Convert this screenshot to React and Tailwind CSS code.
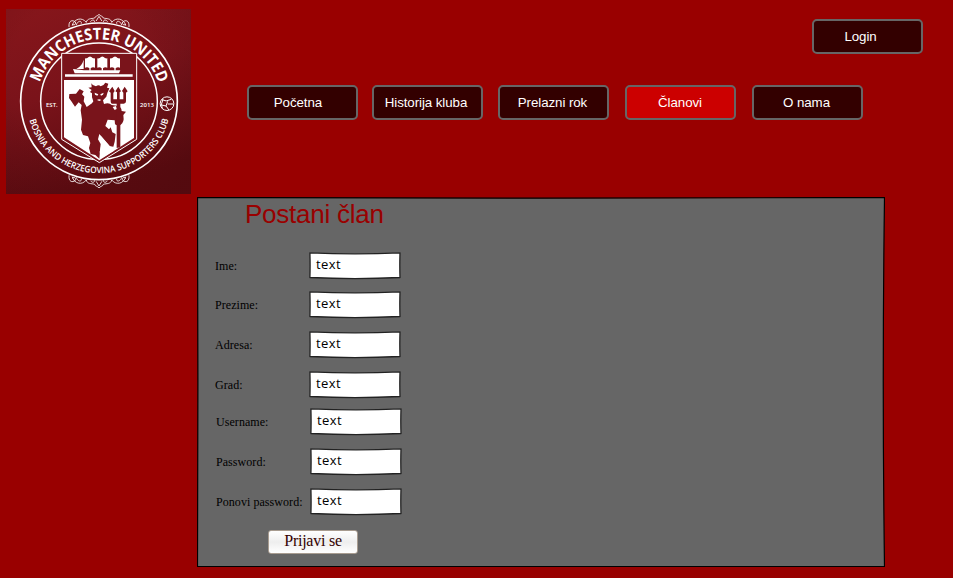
import React from "react";

const NAV = [
  { label: "Početna", box: "ml-0 pr-[9px]" },
  { label: "Historija kluba", box: "ml-[14px] pr-[3px]" },
  { label: "Prelazni rok", box: "ml-[15px] pr-[2px]" },
  { label: "Članovi", box: "ml-[16px] pr-[1px]", active: true },
  { label: "O nama", box: "ml-[16px] pr-[2px]" },
];

const FIELDS = [
  { label: "Ime:", row: "mt-0", indent: "pl-0" },
  { label: "Prezime:", row: "mt-[11px]", indent: "pl-0" },
  { label: "Adresa:", row: "mt-[12px]", indent: "pl-0" },
  { label: "Grad:", row: "mt-[12px]", indent: "pl-0" },
  { label: "Username:", row: "mt-[9px]", indent: "pl-px" },
  { label: "Password:", row: "mt-[12px]", indent: "pl-px" },
  { label: "Ponovi password:", row: "mt-[12px]", indent: "pl-px" },
];

function NavButton({ label, box, active }) {
  return (
    <button
      className={`${box} ${active ? "bg-[#cc0000]" : "bg-[#330000]"} h-[35px] w-[111px] shrink-0 whitespace-nowrap rounded-[5px] border-2 border-[#666666] text-center font-['Liberation_Sans',Arial,sans-serif] text-[13.33px] leading-[31px] tracking-[-0.08px] text-white`}
    >
      {label}
    </button>
  );
}

function Flourish() {
  return (
    <g fill="none" stroke="#fff" strokeWidth="2.5" strokeLinecap="round">
      <path d="M207 80 C205 62 217 58 226 66 C230 72 222 78 217 73 M217 76 C222 56 246 50 258 66 M229 74 C233 61 247 61 244 70" />
      <path d="M272 64 C280 54 287 65 283 66 M322 64 C314 54 307 65 311 66 M259 66 C262 54 274 57 284 54 C286 47 293 49 297 43 C301 49 308 47 310 54 C320 57 332 54 335 66 M289 62 L297 49 L305 62" />
      <path d="M387 80 C389 62 377 58 368 66 C364 72 372 78 377 73 M377 76 C372 56 348 50 336 66 M365 74 C361 61 347 61 350 70" />
    </g>
  );
}

function Crest() {
  return (
    <svg viewBox="18 27 555 555" className="block h-[185px] w-[185px] shrink-0" role="img">
      <defs>
        <linearGradient id="field" x1="0.1" y1="0" x2="0.45" y2="1">
          <stop offset="0" stopColor="#86161b" />
          <stop offset="0.45" stopColor="#7a131a" />
          <stop offset="1" stopColor="#5a0b10" />
        </linearGradient>
        <radialGradient id="edge" cx="0.42" cy="0.35" r="0.8">
          <stop offset="0.5" stopColor="#42060b" stopOpacity="0" />
          <stop offset="1" stopColor="#42060b" stopOpacity="0.25" />
        </radialGradient>
        <path id="topArc" d="M111 304 A186 186 0 0 1 483 304" />
        <path id="bottomArc" d="M81 304 A216 216 0 0 0 513 304" />
      </defs>
      <rect x="18" y="27" width="555" height="555" fill="url(#field)" />
      <rect x="18" y="27" width="555" height="555" fill="url(#edge)" />
      <Flourish />
      <g transform="matrix(1 0 0 -1 0 607)">
        <Flourish />
      </g>
      <circle cx="297" cy="304" r="235" fill="none" stroke="#fff" strokeWidth="5" />
      <circle cx="297" cy="304" r="175" fill="none" stroke="#fff" strokeWidth="4.5" />
      <path d="M185 160 H410 V418 L298 488 L185 418 Z" fill="#7a141b" stroke="#fff" strokeWidth="3" />

      {/* ship */}
      <g fill="#fff">
        <path d="M195 223 H398 V230 H195 Z" />
        <path d="M219 207 L252 211 H361 L357 220 H224 Z" />
        <path d="M229 207 Q246 198 251 179 V207 Z" />
        {[270, 307, 345].map((x) => (
          <path
            key={x}
            transform={`translate(${x} 0)`}
            d="M-15 175 Q-8 176 -4 171 Q0 168 4 171 Q8 176 15 175 V203 Q7 200 2 205 V212 H-2 V205 Q-7 200 -15 203 Z"
          />
        ))}
      </g>

      {/* devil with trident */}
      <path d="M192 240 H402 V414 L298 481 L192 412 Z" fill="#fff" />
      <g fill="#79141b">
        <path d="M274 250 Q278 258 288 259 Q296 252 302 259 Q311 257 316 248 L325 251 L321 263 L328 265 L322 279 L319 290 L309 301 L312 312 Q327 306 335 315 L350 317 Q365 319 365 333 L378 335 L370 345 L371 358 Q370 371 356 379 L345 373 L344 361 L323 359 L316 378 L327 388 L332 382 L337 397 L347 402 L344 425 L340 440 L328 438 L298 402 L294 418 L302 432 L300 452 L298 476 L286 465 L272 462 L267 444 L271 429 L264 409 L249 405 L243 389 L246 359 L242 331 L245 315 L236 307 L225 320 L214 304 L207 294 L208 282 L228 281 L239 267 L251 274 L246 283 L253 290 L251 304 L260 321 L276 310 L280 304 L276 292 L276 280 L270 276 L275 270 L265 263 L275 262 Z" />
        <path d="M350 444 V311 H336 Q332 311 332 304 V278 L327 274 L337 260 L344 273 L340 279 V298 H351 V277 L346 274 L355 260 L363 274 L359 277 V298 H370 V278 L366 273 L374 260 L383 274 L378 278 V304 Q378 311 371 311 H361 V442 Z" />
      </g>
      <g fill="#fff">
        <path d="M284 278 L295 283 L292 287 L285 284 Z M301 283 L311 278 L309 284 L303 287 Z M291 300 Q297 296 304 300 L298 303 Z" />
        <path d="M301 406 L342 452 L309 472 L302 474 L299 455 L305 432 Z" />
        <path d="M348 318 L350 327 L344 330 L338 321 Z M324 364 L336 366 L331 374 Z" />
      </g>

      {/* ball */}
      <g fill="none" stroke="#fff" strokeWidth="3">
        <circle cx="501" cy="311" r="20.5" />
        <path d="M486 299 Q497 307 514 298 M489 298 Q481 312 487 326 M503 304 L498 318 L485 315 M498 318 L507 330 M503 312 H520" />
      </g>

      <g fill="#fff" className="font-['Open_Sans','Noto_Sans',sans-serif]">
        <text fontSize="48" fontWeight="700">
          <textPath href="#topArc" startOffset="57" textLength="472" lengthAdjust="spacingAndGlyphs">
            MANCHESTER UNITED
          </textPath>
        </text>
        <text fontSize="27" fontWeight="600">
          <textPath href="#bottomArc" startOffset="57" textLength="566" lengthAdjust="spacingAndGlyphs">
            BOSNIA AND HERZEGOVINA SUPPORTERS CLUB
          </textPath>
        </text>
        <text x="138" y="320" fontSize="18" fontWeight="600" textLength="35">EST.</text>
        <text x="420" y="320" fontSize="18" fontWeight="600" textLength="42">2013</text>
      </g>
    </svg>
  );
}

function SketchInput() {
  return (
    <div className="grid h-[28px] w-[92px] shrink-0">
      <svg viewBox="0 0 92 28" className="col-start-1 row-start-1 h-[28px] w-[92px]">
        <path
          d="M0.9 0.8 Q46 2.8 91 0.8 Q90.6 14 91 25.5 Q46 27.7 0.9 25.5 Q1.3 14 0.9 0.8 Z"
          fill="#fff"
          stroke="#222"
          strokeWidth="1.3"
          strokeLinejoin="round"
        />
      </svg>
      <span className="z-10 col-start-1 row-start-1 pl-[7px] pt-[3px] font-['Comic_Sans_MS','Open_Sans',sans-serif] text-[13px] font-medium leading-[18px] tracking-[0.4px] text-black">
        text
      </span>
    </div>
  );
}

export default function App() {
  return (
    <div className="h-[578px] w-[953px] overflow-hidden bg-[#990000]">
      <header className="flex h-[197px] pl-[6px] pt-[9px]">
        <Crest />
        <div className="flex flex-1 flex-col pl-[56px] pt-[10px]">
          <div className="flex justify-end pr-[30px]">
            <NavButton label="Login" box="pr-[14px]" />
          </div>
          <nav className="mt-[31px] flex">
            {NAV.map((item) => (
              <NavButton key={item.label} {...item} />
            ))}
          </nav>
        </div>
      </header>

      <main className="ml-[197px] grid h-[370px] w-[688px]">
        <svg viewBox="0 0 688 370" className="col-start-1 row-start-1 h-[370px] w-[688px]">
          <path
            d="M0.5 0.5 Q344 1.8 687.5 0.5 Q685 185 687.5 369.5 H0.5 Q1.3 185 0.5 0.5 Z"
            fill="#666666"
            stroke="#000"
            strokeWidth="1.2"
          />
        </svg>
        <form className="z-10 col-start-1 row-start-1 flex flex-col items-start pl-[18px]">
          <h1 className="ml-[30px] mt-[2px] h-[30px] whitespace-nowrap font-['Liberation_Sans',Arial,sans-serif] text-[26px] leading-[30px] tracking-[-0.25px] text-[#990000]">
            Postani član
          </h1>
          <div className="mt-[23px]">
            {FIELDS.map((field) => (
              <div key={field.label} className={`flex ${field.row} ${field.indent}`}>
                <label className="w-[94px] shrink-0 whitespace-nowrap pt-[6px] font-['Liberation_Serif','Times_New_Roman',serif] text-[12px] leading-[16px] tracking-[0.06px] text-black">
                  {field.label}
                </label>
                <SketchInput />
              </div>
            ))}
          </div>
          <button
            type="button"
            className="ml-[53px] mt-[14px] h-[24px] w-[90px] rounded-[3px] border border-[#a89c90] bg-linear-to-b from-white via-[#eeeeee] to-white pb-[2px] text-center font-['Liberation_Serif',serif] text-[16px] leading-[20px] tracking-[-0.25px] text-[#330000]"
          >
            Prijavi se
          </button>
        </form>
      </main>
    </div>
  );
}
